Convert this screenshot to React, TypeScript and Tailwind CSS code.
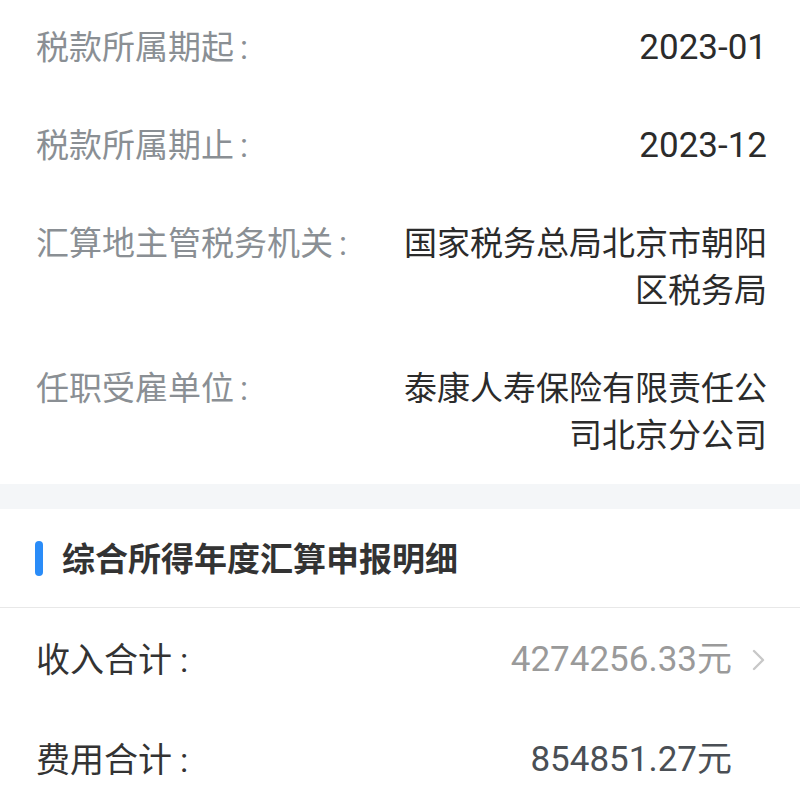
import React from "react";

const FONT = { fontFamily: "Roboto, 'Noto Sans CJK SC', sans-serif" };

function InfoRow({ label, value, numeric }: { label: string; value: string; numeric?: boolean }) {
  return (
    <div className="flex justify-between items-start pl-[36px] pr-[33px] py-[25.5px] text-[33px] leading-[47px]">
      <div className="text-[#8a8f94] whitespace-nowrap">
        {label}
        <span className="ml-[6px]">:</span>
      </div>
      <div className={numeric ? "text-[#2b2b2b] text-right text-[35px]" : "text-[#2b2b2b] text-right max-w-[368px]"}>{value}</div>
    </div>
  );
}

function Chevron() {
  return (
    <svg width="16" height="22" viewBox="0 0 16 22" fill="none">
      <path d="M3 2 L12 11 L3 20" stroke="#c8c8c8" strokeWidth="2.4" strokeLinecap="round" strokeLinejoin="round" />
    </svg>
  );
}

function SumRow({ label, value, valueClass, arrow }: { label: string; value: string; valueClass: string; arrow: boolean }) {
  return (
    <div className="flex items-center justify-between h-[100px] pl-[36px] pr-[33px]">
      <div className="text-[#333333] text-[34px]">
        {label}
        <span className="ml-[8px]">:</span>
      </div>
      <div className="flex items-center">
        <span className={valueClass}>{value}</span>
        <span className="w-[35px] flex justify-end">{arrow ? <Chevron /> : null}</span>
      </div>
    </div>
  );
}

export default function App() {
  return (
    <div className="w-[800px] h-[800px] overflow-hidden bg-white" style={FONT}>
      <div className="-mt-[2px]">
        <InfoRow label="税款所属期起" value="2023-01" numeric />
        <InfoRow label="税款所属期止" value="2023-12" numeric />
        <InfoRow label="汇算地主管税务机关" value="国家税务总局北京市朝阳区税务局" />
        <InfoRow label="任职受雇单位" value="泰康人寿保险有限责任公司北京分公司" />
      </div>
      <div className="h-[25px] bg-[#f4f6f8]" />
      <div className="flex items-center h-[98px] pl-[35px]">
        <div className="w-[8px] h-[35px] rounded-full bg-[#2a8cf8]" />
        <div className="ml-[19px] text-[33px] font-bold text-[#333333] pt-[4px]">综合所得年度汇算申报明细</div>
      </div>
      <div className="h-px bg-[#e8e8e8]" />
      <div className="pt-[2px]">
        <SumRow label="收入合计" value="4274256.33元" valueClass="text-[#9a9a9a] text-[35px]" arrow />
        <SumRow label="费用合计" value="854851.27元" valueClass="text-[#4a4f55] text-[35px]" arrow={false} />
      </div>
    </div>
  );
}
